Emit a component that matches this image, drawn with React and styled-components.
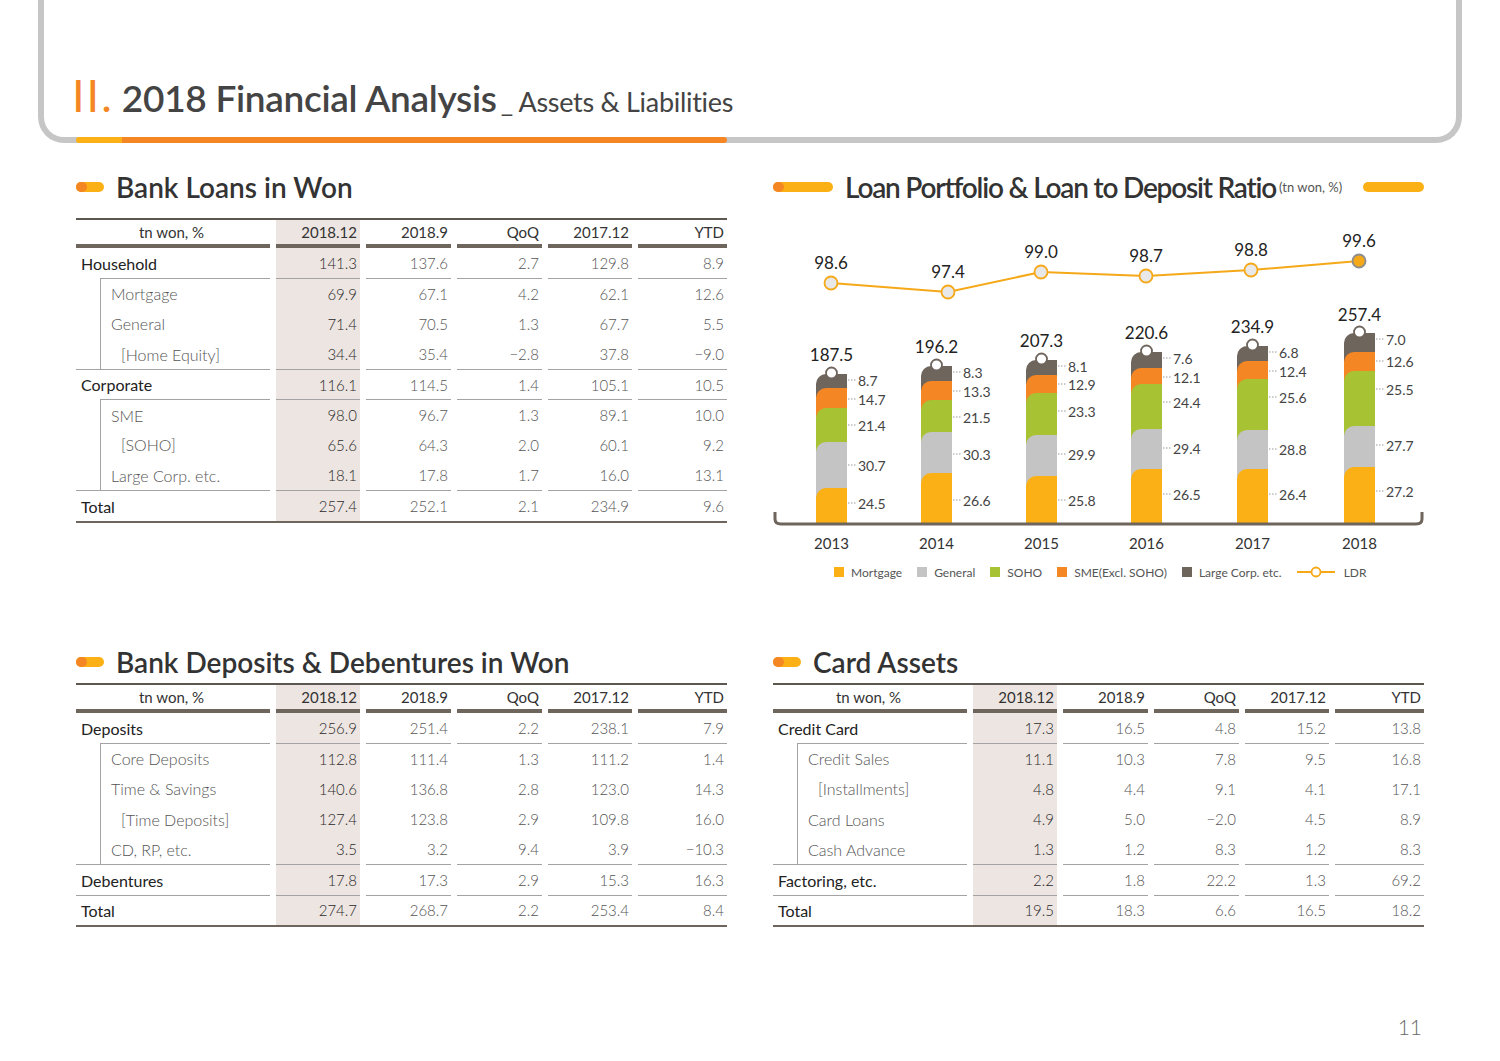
import React from 'react';
import styled, { createGlobalStyle } from 'styled-components';

const C = {
  yellow: '#fbb116',
  gray: '#c4c4c4',
  green: '#a7c232',
  orange: '#f58624',
  dark: '#6e655d',
  ldr: '#f5a818',
  shade: '#ede5e1',
};

const GlobalStyle = createGlobalStyle`
  html, body { margin: 0; padding: 0; background: #fff; }
  body { font-family: Lato, "Open Sans", sans-serif; color: #333; }
`;

const Page = styled.div`
  width: 1500px;
  height: 1061px;
  display: flex;
  flex-direction: column;
  overflow: hidden;
  background: #fff;
`;

const Header = styled.header`
  position: relative;
  box-sizing: border-box;
  height: 143px;
  margin: 0 38px;
  border: 6px solid #c6c6c6;
  border-top: none;
  border-radius: 0 0 26px 26px;
  display: flex;
  align-items: flex-end;
  padding: 0 0 19px 28px;
`;

const Title = styled.h1`
  margin: 0;
  display: flex;
  align-items: baseline;
  font-weight: 600;
  font-size: 37px;
  line-height: 1;
  color: #444;
  letter-spacing: -0.3px;
`;

const Numeral = styled.span`
  color: ${C.orange};
  font-weight: 400;
  font-size: 45px;
  letter-spacing: 2px;
  margin-right: 8px;
`;

const Sub = styled.span`
  font-size: 27px;
  font-weight: 400;
  color: #444;
  margin-left: 4px;
`;

const HeaderBar = styled.div`
  position: absolute;
  left: 32px;
  bottom: -6px;
  width: 651px;
  height: 6px;
  border-radius: 3px;
  background: linear-gradient(to right, ${C.yellow} 0 46px, ${C.orange} 46px);
`;

const Content = styled.main`
  display: grid;
  grid-template-columns: 651px 651px;
  grid-template-rows: 475px auto;
  column-gap: 46px;
  padding: 29px 0 0 76px;
`;

const Section = styled.section`
  display: flex;
  flex-direction: column;
`;

const Heading = styled.div`
  display: flex;
  align-items: center;
  height: 30px;
  margin-bottom: ${p => p.$gap}px;
  font-size: 28px;
  font-weight: 600;
  color: #333;
`;

const Pill = styled.span`
  position: relative;
  width: ${p => p.$w}px;
  height: 10px;
  border-radius: 5px;
  background: ${C.yellow};
  margin-right: 12px;
  flex: none;
  &::before {
    content: '';
    display: ${p => (p.$dot ? 'block' : 'none')};
    position: absolute;
    left: 0;
    top: 0;
    width: 11px;
    height: 10px;
    border-radius: 5px;
    background: ${C.orange};
  }
`;

const ChartTitle = styled.span`
  letter-spacing: -1.2px;
`;

const Unit = styled.span`
  font-size: 13px;
  font-weight: 400;
  color: #555;
  margin-left: 3px;
`;

const RightPill = styled(Pill)`
  margin: 0 0 0 auto;
`;

const Grid = styled.div`
  display: grid;
  grid-template-columns: 194px 84px 85px 85px 84px 89px;
  grid-template-rows: 28px;
  grid-auto-rows: 30.3px;
  column-gap: 6px;
  border-top: 2px solid #5d5752;
  border-bottom: 2px solid #6e655d;
  font-size: 15px;
`;

const Th = styled.div`
  box-sizing: border-box;
  display: flex;
  align-items: center;
  justify-content: ${p => (p.$center ? 'center' : 'flex-end')};
  padding: 0 3px 0 0;
  border-bottom: 4px solid ${C.dark};
  background: ${p => (p.$hl ? C.shade : 'transparent')};
  color: #333;
`;

const Td = styled.div`
  box-sizing: border-box;
  display: flex;
  align-items: center;
  justify-content: flex-end;
  padding-right: 3px;
  border-top: ${p => (p.$rule ? '1px solid #a3a3a3' : 'none')};
  background: ${p => (p.$hl ? C.shade : 'transparent')};
  color: ${p => (p.$hl ? '#2a2a2a' : '#555')};
  font-weight: 300;
`;

const Label = styled.div`
  box-sizing: border-box;
  display: flex;
  align-items: center;
  margin-left: ${p => (p.$sub ? 24 : 0)}px;
  padding-left: ${p => (p.$sub ? (p.$deep ? 20 : 10) : 5)}px;
  border-left: ${p => (p.$sub ? '1px solid #a3a3a3' : 'none')};
  border-top: ${p => (p.$rule ? '1px solid #a3a3a3' : 'none')};
  font-size: 16px;
  color: ${p => (p.$sub ? '#555' : '#222')};
  font-weight: ${p => (p.$sub ? 300 : 400)};
`;

const Footer = styled.footer`
  margin-top: auto;
  display: flex;
  justify-content: flex-end;
  padding: 0 78px 22px 0;
  font-size: 21px;
  font-weight: 300;
  color: #666;
`;

const Legend = styled.div`
  display: flex;
  align-items: center;
  height: 14px;
  margin-top: 10px;
  padding-left: 61px;
  font-size: 12px;
  color: #555;
`;

const LegendItem = styled.span`
  display: flex;
  align-items: center;
  margin-right: 15px;
  &::before {
    content: '';
    display: ${p => (p.$c ? 'block' : 'none')};
    width: 10px;
    height: 10px;
    margin-right: 7px;
    background: ${p => p.$c};
  }
`;

const cols = ['2018.12', '2018.9', 'QoQ', '2017.12', 'YTD'];

const loans = [
  { label: 'Household', v: ['141.3', '137.6', '2.7', '129.8', '8.9'] },
  { label: 'Mortgage', sub: true, rule: true, v: ['69.9', '67.1', '4.2', '62.1', '12.6'] },
  { label: 'General', sub: true, v: ['71.4', '70.5', '1.3', '67.7', '5.5'] },
  { label: '[Home Equity]', sub: true, deep: true, v: ['34.4', '35.4', '−2.8', '37.8', '−9.0'] },
  { label: 'Corporate', rule: true, v: ['116.1', '114.5', '1.4', '105.1', '10.5'] },
  { label: 'SME', sub: true, rule: true, v: ['98.0', '96.7', '1.3', '89.1', '10.0'] },
  { label: '[SOHO]', sub: true, deep: true, v: ['65.6', '64.3', '2.0', '60.1', '9.2'] },
  { label: 'Large Corp. etc.', sub: true, v: ['18.1', '17.8', '1.7', '16.0', '13.1'] },
  { label: 'Total', rule: true, v: ['257.4', '252.1', '2.1', '234.9', '9.6'] },
];

const deposits = [
  { label: 'Deposits', v: ['256.9', '251.4', '2.2', '238.1', '7.9'] },
  { label: 'Core Deposits', sub: true, rule: true, v: ['112.8', '111.4', '1.3', '111.2', '1.4'] },
  { label: 'Time & Savings', sub: true, v: ['140.6', '136.8', '2.8', '123.0', '14.3'] },
  { label: '[Time Deposits]', sub: true, deep: true, v: ['127.4', '123.8', '2.9', '109.8', '16.0'] },
  { label: 'CD, RP, etc.', sub: true, v: ['3.5', '3.2', '9.4', '3.9', '−10.3'] },
  { label: 'Debentures', rule: true, v: ['17.8', '17.3', '2.9', '15.3', '16.3'] },
  { label: 'Total', rule: true, v: ['274.7', '268.7', '2.2', '253.4', '8.4'] },
];

const cards = [
  { label: 'Credit Card', v: ['17.3', '16.5', '4.8', '15.2', '13.8'] },
  { label: 'Credit Sales', sub: true, rule: true, v: ['11.1', '10.3', '7.8', '9.5', '16.8'] },
  { label: '[Installments]', sub: true, deep: true, v: ['4.8', '4.4', '9.1', '4.1', '17.1'] },
  { label: 'Card Loans', sub: true, v: ['4.9', '5.0', '−2.0', '4.5', '8.9'] },
  { label: 'Cash Advance', sub: true, v: ['1.3', '1.2', '8.3', '1.2', '8.3'] },
  { label: 'Factoring, etc.', rule: true, v: ['2.2', '1.8', '22.2', '1.3', '69.2'] },
  { label: 'Total', rule: true, v: ['19.5', '18.3', '6.6', '16.5', '18.2'] },
];

function DataTable({ rows }) {
  return (
    <Grid>
      <Th $center>tn won, %</Th>
      {cols.map((c, i) => (
        <Th key={c} $hl={i === 0}>{c}</Th>
      ))}
      {rows.map(r => (
        <React.Fragment key={r.label}>
          <Label $sub={r.sub} $deep={r.deep} $rule={r.rule}>{r.label}</Label>
          {r.v.map((v, i) => (
            <Td key={i} $hl={i === 0} $rule={r.rule}>{v}</Td>
          ))}
        </React.Fragment>
      ))}
    </Grid>
  );
}

const BASE = 524;
const BW = 31;
const R = 10;
const segColors = [C.dark, C.orange, C.green, C.gray, C.yellow];

const bars = [
  { year: '2013', x: 816, total: '187.5', ty: 354, tops: [374, 388, 408, 442, 488], vals: ['8.7', '14.7', '21.4', '30.7', '24.5'], ly: [380, 399, 425, 465, 503] },
  { year: '2014', x: 921, total: '196.2', ty: 346, tops: [366, 381, 400, 432, 473], vals: ['8.3', '13.3', '21.5', '30.3', '26.6'], ly: [372, 391, 417, 454, 500] },
  { year: '2015', x: 1026, total: '207.3', ty: 340, tops: [360, 375, 393, 435, 476], vals: ['8.1', '12.9', '23.3', '29.9', '25.8'], ly: [366, 384, 411, 454, 500] },
  { year: '2016', x: 1131, total: '220.6', ty: 332, tops: [352, 368, 384, 429, 469], vals: ['7.6', '12.1', '24.4', '29.4', '26.5'], ly: [358, 377, 402, 448, 494] },
  { year: '2017', x: 1237, total: '234.9', ty: 326, tops: [346, 361, 379, 430, 469], vals: ['6.8', '12.4', '25.6', '28.8', '26.4'], ly: [352, 371, 397, 449, 494] },
  { year: '2018', x: 1344, total: '257.4', ty: 314, tops: [333, 352, 371, 426, 467], vals: ['7.0', '12.6', '25.5', '27.7', '27.2'], ly: [339, 361, 389, 445, 491] },
];

const ldr = [
  { x: 831, y: 283, v: '98.6' },
  { x: 948, y: 292, v: '97.4' },
  { x: 1041, y: 272, v: '99.0' },
  { x: 1146, y: 276, v: '98.7' },
  { x: 1251, y: 270, v: '98.8' },
  { x: 1359, y: 261, v: '99.6' },
];

const seg = (x, y) =>
  `M${x},${BASE} V${y + R} A${R},${R} 0 0 1 ${x + R},${y} H${x + BW} V${BASE} Z`;

function Chart() {
  return (
    <svg width="651" height="340" viewBox="773 215 651 340" style={{ display: 'block', fontFamily: 'Lato, sans-serif' }}>
      {bars.map(b => (
        <g key={b.year}>
          {b.tops.map((t, i) => (
            <path key={i} d={seg(b.x, t)} fill={segColors[i]} />
          ))}
          <circle cx={b.x + BW / 2} cy={b.tops[0] - 1} r="5.5" fill="#fff" stroke={C.dark} strokeWidth="1.8" />
          {b.vals.map((v, i) => (
            <g key={v + i}>
              <line x1={b.x + BW + 1} x2={b.x + BW + 9} y1={b.ly[i]} y2={b.ly[i]} stroke="#9a9a9a" strokeDasharray="1.5 1.5" />
              <text x={b.x + BW + 11} y={b.ly[i]} dominantBaseline="central" fontSize="14" fill="#444">{v}</text>
            </g>
          ))}
          <text x={b.x + BW / 2} y={b.ty} textAnchor="middle" dominantBaseline="central" fontSize="17" fill="#222">{b.total}</text>
          <text x={b.x + BW / 2} y="543" textAnchor="middle" dominantBaseline="central" fontSize="15" fill="#333">{b.year}</text>
        </g>
      ))}
      <path d="M775,512 V519 Q775,524 781,524 H1416 Q1422,524 1422,519 V512" fill="none" stroke={C.dark} strokeWidth="3" />
      <polyline points={ldr.map(p => `${p.x},${p.y}`).join(' ')} fill="none" stroke={C.ldr} strokeWidth="2" />
      {ldr.map((p, i) => (
        <g key={p.v}>
          <circle cx={p.x} cy={p.y} r="6.5" fill={i === ldr.length - 1 ? C.ldr : '#e8e8e8'} stroke={i === ldr.length - 1 ? '#8d8d8d' : C.ldr} strokeWidth="1.8" />
          <text x={p.x} y={p.y - 21} textAnchor="middle" dominantBaseline="central" fontSize="17" fill="#222">{p.v}</text>
        </g>
      ))}
    </svg>
  );
}

function LdrMark() {
  return (
    <svg width="38" height="12" viewBox="0 0 38 12" style={{ marginRight: 9 }}>
      <line x1="0" y1="6" x2="38" y2="6" stroke={C.ldr} strokeWidth="2" />
      <circle cx="19" cy="6" r="4.5" fill="#fff" stroke={C.ldr} strokeWidth="1.8" />
    </svg>
  );
}

export default function App() {
  return (
    <Page>
      <GlobalStyle />
      <Header>
        <Title>
          <Numeral>II.</Numeral>
          2018 Financial Analysis<Sub>_ Assets &amp; Liabilities</Sub>
        </Title>
        <HeaderBar />
      </Header>
      <Content>
        <Section>
          <Heading $gap={16}><Pill $w={28} $dot />Bank Loans in Won</Heading>
          <DataTable rows={loans} />
        </Section>
        <Section>
          <Heading $gap={13}>
            <Pill $w={60} $dot />
            <ChartTitle>Loan Portfolio &amp; Loan to Deposit Ratio</ChartTitle>
            <Unit>(tn won, %)</Unit>
            <RightPill $w={61} />
          </Heading>
          <Chart />
          <Legend>
            <LegendItem $c={C.yellow}>Mortgage</LegendItem>
            <LegendItem $c={C.gray}>General</LegendItem>
            <LegendItem $c={C.green}>SOHO</LegendItem>
            <LegendItem $c={C.orange}>SME(Excl. SOHO)</LegendItem>
            <LegendItem $c={C.dark}>Large Corp. etc.</LegendItem>
            <LegendItem><LdrMark />LDR</LegendItem>
          </Legend>
        </Section>
        <Section>
          <Heading $gap={6}><Pill $w={28} $dot />Bank Deposits &amp; Debentures in Won</Heading>
          <DataTable rows={deposits} />
        </Section>
        <Section>
          <Heading $gap={6}><Pill $w={28} $dot />Card Assets</Heading>
          <DataTable rows={cards} />
        </Section>
      </Content>
      <Footer>11</Footer>
    </Page>
  );
}
